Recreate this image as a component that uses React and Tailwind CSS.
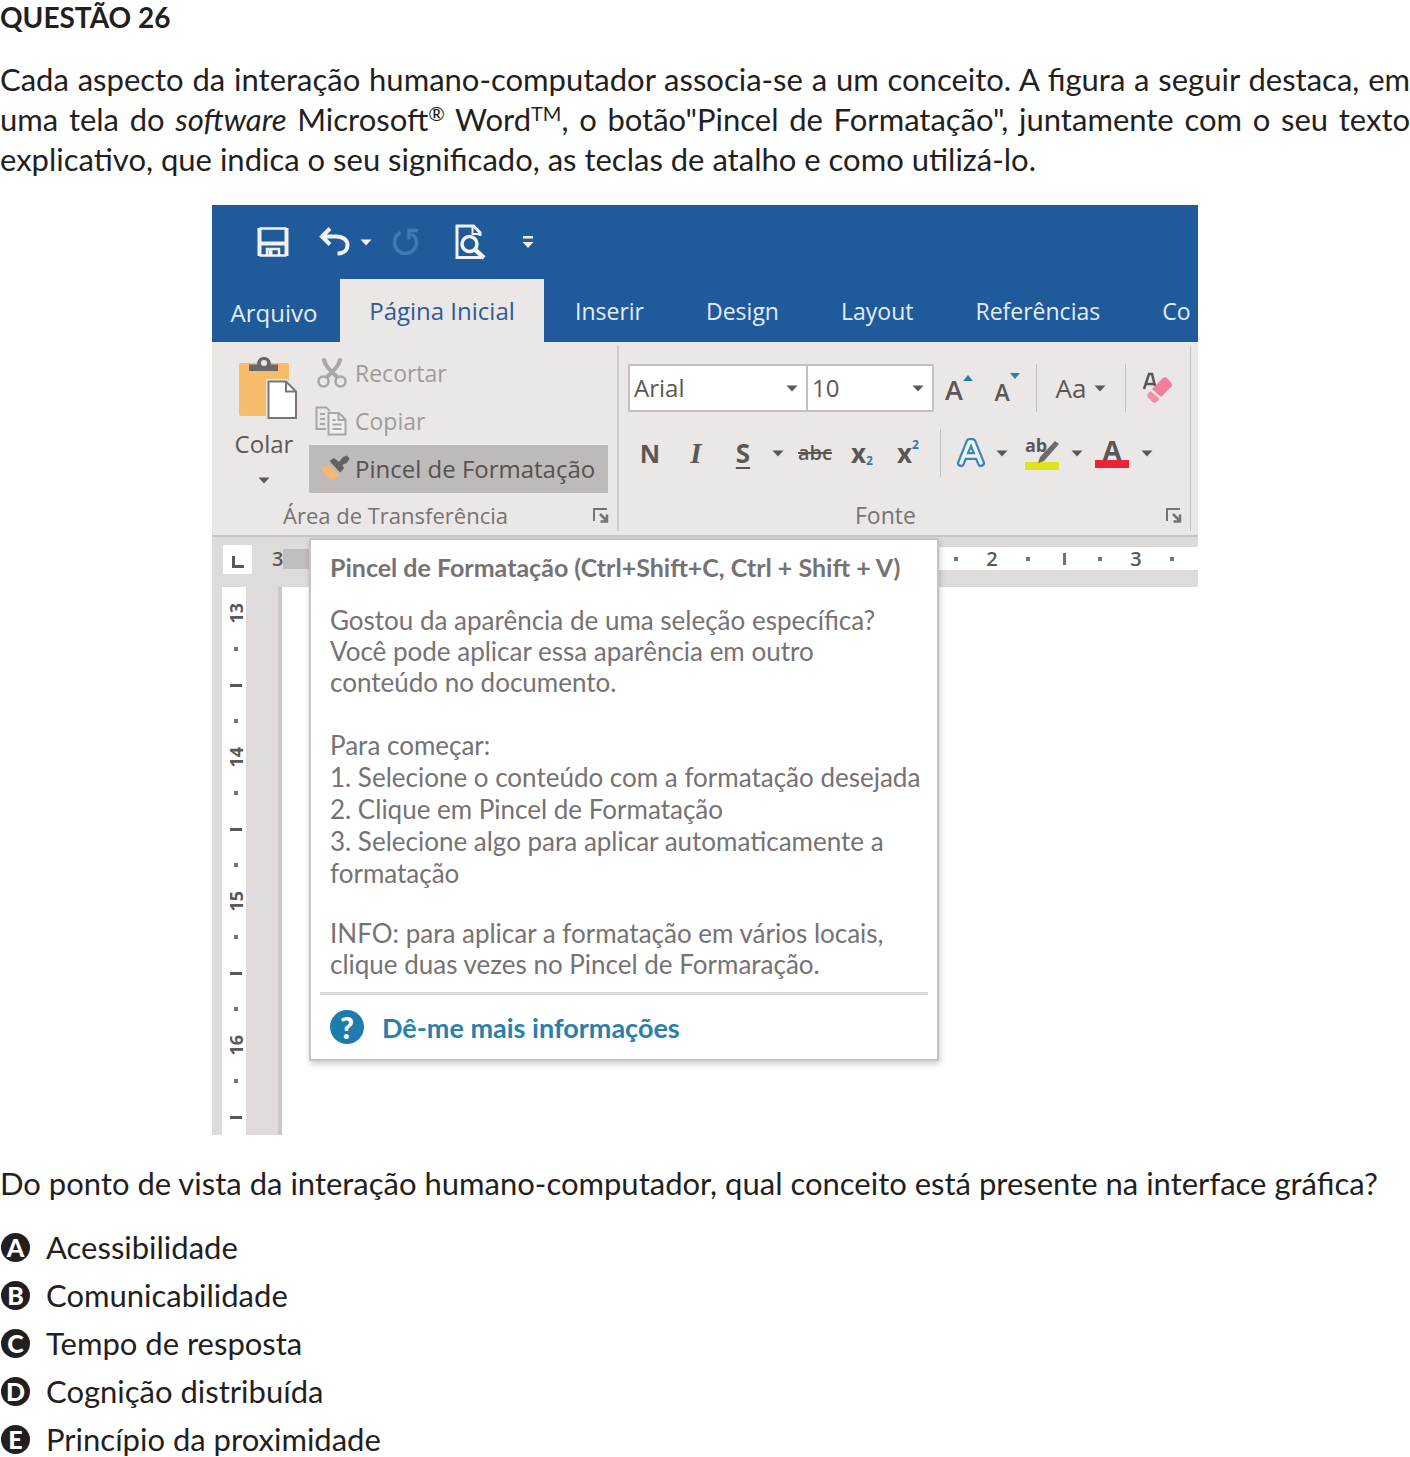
import React from "react";

const UI = "font-['Open_Sans','Noto_Sans',sans-serif]";

function Caret({ className = "text-[#5c5757]" }) {
  return (
    <svg viewBox="0 0 12 7" className={`h-[7px] w-3 shrink-0 ${className}`} fill="currentColor" aria-hidden="true">
      <path d="M0.5 0.5h11L6 6.5z" />
    </svg>
  );
}

function SaveIcon() {
  return (
    <svg viewBox="0 0 32 32" className="size-8" fill="none" stroke="#f3f1f5" strokeWidth="3" aria-hidden="true">
      <path d="M2.500 2v28M29.500 2v28" strokeWidth="4" />
      <path d="M2.500 2.500h27M2.500 29.500h27" strokeWidth="2.500" />
      <path d="M3 17.500h26" strokeWidth="4" />
      <path d="M10 30v-7h12v7" strokeWidth="2.500" />
      <path d="M13.500 24v5" strokeWidth="4" />
    </svg>
  );
}

function UndoIcon() {
  return (
    <svg viewBox="0 0 32 30" className="h-[30px] w-8" fill="none" stroke="#f3f1f5" strokeWidth="4" aria-hidden="true">
      <path d="M12 1.500L4 9.500L12 17.500" />
      <path d="M3.500 9.500H18c7 0 11.500 3.500 11.500 8.500c0 5-3.500 8.500-10 8.500" />
    </svg>
  );
}

function RedoIcon() {
  return (
    <svg viewBox="0 0 28 28" className="size-7" fill="none" stroke="#4179b5" strokeWidth="3.500" aria-hidden="true">
      <path d="M8.500 4.500C4.500 6.500 2.500 10 2.500 14c0 6.500 5 11.500 11 11.500S24.500 20.500 24.500 14.500c0-4-2-7-5-8.500" />
      <path d="M26 2.500h-9v9" />
    </svg>
  );
}

function PreviewIcon() {
  return (
    <svg viewBox="0 0 32 36" className="h-9 w-8" fill="none" stroke="#f3f1f5" strokeWidth="3" aria-hidden="true">
      <path d="M26 12V8.500L19.500 2H3v31.500h24" />
      <path d="M18.500 2v8H26" strokeWidth="2" />
      <circle cx="15.500" cy="20" r="7.500" strokeWidth="3.500" />
      <path d="M20.500 25l9.500 9" strokeWidth="4.500" />
    </svg>
  );
}

function CustomizeIcon() {
  return (
    <svg viewBox="0 0 12 13" className="h-[13px] w-3" fill="#f3f1f5" aria-hidden="true">
      <path d="M1 0h10v2.500H1zM0.500 6h11L6 12z" />
    </svg>
  );
}

function PasteIcon() {
  return (
    <svg viewBox="0 0 60 64" className="h-16 w-[60px]" aria-hidden="true">
      <rect x="1" y="7" width="50" height="53" rx="2" fill="#f7bb6c" />
      <path d="M11 15V8.500h8C19 3.500 22 1 26 1s7 2.500 7 7.500h7V15z" fill="#686769" />
      <circle cx="26" cy="7" r="3" fill="#ebe7e7" />
      <path d="M28 23h21l11 11v30H28z" fill="#ebe7e7" />
      <path d="M30.500 25.500h17.500l10 10v26.500h-27.500z" fill="#fff" stroke="#77757a" strokeWidth="2" />
      <path d="M48 25.500v10h10" fill="none" stroke="#77757a" strokeWidth="2" />
    </svg>
  );
}

function CutIcon() {
  return (
    <svg viewBox="0 0 30 32" className="h-8 w-[30px]" fill="none" stroke="#aaa5a6" strokeWidth="2.500" aria-hidden="true">
      <circle cx="6.500" cy="24.500" r="5" />
      <circle cx="23.500" cy="24.500" r="5" />
      <path d="M6.500 1.500C8 9 13 13 20.500 20.500M23.500 1.500C22 9 17 13 9.500 20.500" strokeWidth="4" />
    </svg>
  );
}

function CopyIcon() {
  return (
    <svg viewBox="0 0 32 30" className="h-[30px] w-8" fill="none" stroke="#aaa5a6" strokeWidth="2" aria-hidden="true">
      <path d="M11 23H1.500V1.500H11l4 3.500" />
      <path d="M5 8h5M5 13h5M5 18h5" />
      <path d="M13.500 7h10.500l6.500 6.500V28.500h-17z" fill="#f1eeee" />
      <path d="M23.500 7v7h7M17.500 14h3M17.500 18.500h9M17.500 23h9" />
    </svg>
  );
}

function BrushIcon() {
  return (
    <svg viewBox="0 0 32 30" className="h-[30px] w-8" aria-hidden="true">
      <path d="M10 11l10 10-5.500 6C9 24 4.500 20 2 14z" fill="#f3b673" />
      <path d="M10.500 7L15 4l5 4 4-5 4-1.500 2.500 3-2 4-5 2.500 1.500 3.500-4 4z" fill="#626063" />
    </svg>
  );
}

function LauncherIcon() {
  return (
    <svg viewBox="0 0 16 15" className="h-[15px] w-4" fill="none" stroke="#777274" strokeWidth="2" aria-hidden="true">
      <path d="M1 13V1h13" />
      <path d="M7 6l6 6M14 6.500v7H7.500" strokeWidth="2.500" />
    </svg>
  );
}

function EraserIcon() {
  return (
    <svg viewBox="0 0 32 34" className="h-[34px] w-8" aria-hidden="true">
      <path d="M2 18L7 3h3l3 12M4 13h8" fill="none" stroke="#5c5757" strokeWidth="2.500" />
      <path d="M10 18L21 7q2-1.500 4 0l4.500 5q1.500 2 0 3.500L19 26z" fill="#f07f9c" />
      <path d="M8.500 20l9 8-3 3q-2 1.500-4 0l-4.500-4.500q-1.500-2 0-4z" fill="#f28ea8" />
    </svg>
  );
}

function TextEffectIcon() {
  return (
    <svg viewBox="0 0 30 32" className="h-8 w-[30px]" aria-hidden="true">
      <path d="M5 26L13.500 5h3L25 26M9 19h12" fill="none" stroke="#3d85b5" strokeWidth="8" strokeLinejoin="round" strokeLinecap="round" />
      <path d="M5 26L13.500 5h3L25 26M9 19h12" fill="none" stroke="#eef6fb" strokeWidth="3.500" strokeLinejoin="round" strokeLinecap="round" />
    </svg>
  );
}

function HighlightIcon() {
  return (
    <span className="flex w-[34px] flex-col">
      <span className="relative h-[26px] text-left text-[18px] font-bold leading-[18px]">
        ab
        <svg viewBox="0 0 26 24" className="absolute right-0 top-1 h-6 w-[26px]" aria-hidden="true">
          <path d="M22 1l4 3-15 17-6 2 2-6z" fill="#6e6a6a" />
        </svg>
      </span>
      <span className="h-2 bg-[#dfe31c]" />
    </span>
  );
}

function FontColorIcon() {
  return (
    <span className="flex w-[34px] flex-col text-center">
      <span className="h-[22px] text-[27px] font-bold leading-[24px]">A</span>
      <span className="h-2 bg-[#ec2436]" />
    </span>
  );
}

function ToolButton({ label, className, children }) {
  return (
    <button type="button" aria-label={label} className={`flex h-12 shrink-0 items-center justify-center ${className}`}>
      {children}
    </button>
  );
}

function Separator() {
  return <span className="h-12 w-px shrink-0 bg-[#c6c1c1]" />;
}

function Combo({ label, value, options, className }) {
  return (
    <div className={`relative flex h-[48px] shrink-0 items-center border-2 border-[#c4c0c0] bg-white ${className}`}>
      <select
        aria-label={label}
        defaultValue={value}
        className="h-full w-full appearance-none bg-transparent pl-1 text-[24px] text-[#5c5757]"
      >
        {options.map((o) => (
          <option key={o}>{o}</option>
        ))}
      </select>
      <span className="pointer-events-none absolute right-2">
        <Caret />
      </span>
    </div>
  );
}

function TitleBar() {
  return (
    <div className="flex h-[74px] items-center pl-[45px]">
      <button type="button" aria-label="Salvar"><SaveIcon /></button>
      <button type="button" aria-label="Desfazer" className="ml-[29px] flex items-center gap-2.5">
        <UndoIcon />
        <Caret className="text-[#f3f1f5]" />
      </button>
      <button type="button" aria-label="Refazer" className="ml-5"><RedoIcon /></button>
      <button type="button" aria-label="Visualizar impressão" className="ml-[34px]"><PreviewIcon /></button>
      <button type="button" aria-label="Personalizar" className="ml-9"><CustomizeIcon /></button>
    </div>
  );
}

function Tabs() {
  const rest = ["Inserir", "Design", "Layout", "Referências"];
  return (
    <div role="tablist" className="flex h-[63px] overflow-hidden text-[23px] text-[#e4edf7]">
      <button type="button" role="tab" className="w-32 shrink-0 pr-1 pt-1 text-[24px]">Arquivo</button>
      <button type="button" role="tab" aria-selected="true" className="w-[204px] shrink-0 bg-[#ebe7e7] text-[24px] text-[#2f5b95]">
        Página Inicial
      </button>
      {rest.map((t) => (
        <button key={t} type="button" role="tab" className="shrink-0 px-[31px]">{t}</button>
      ))}
      <button type="button" role="tab" className="shrink-0 pl-[31px]">Co</button>
    </div>
  );
}

function ClipboardGroup() {
  return (
    <section className="flex w-[407px] shrink-0 flex-col border-r-2 border-[#d0cccc]">
      <div className="flex">
        <button type="button" className="flex w-[97px] flex-col items-center pl-[15px] pt-2.5 text-[24px] leading-8 text-[#5c5757]">
          <PasteIcon />
          <span className="mt-2 pr-2">Colar</span>
          <span className="mt-1 flex h-8 items-center pr-2"><Caret /></span>
        </button>
        <div className="flex w-[299px] flex-col pt-[3px] text-[23px]">
          <button type="button" className="flex h-12 items-center gap-2 pl-2 text-[#a09b9b]"><CutIcon />Recortar</button>
          <button type="button" className="flex h-12 items-center gap-2 pl-1.5 text-[#a09b9b]"><CopyIcon />Copiar</button>
          <button type="button" className="flex h-12 items-center gap-1 whitespace-nowrap bg-[#bdbab9] pl-2.5 text-[24px] text-[#565152]"><BrushIcon />Pincel de Formatação</button>
        </div>
      </div>
      <div className="mt-auto flex h-8 items-center pl-[71px] pr-2 text-[22px] text-[#777274]">
        <span>Área de Transferência</span>
        <button type="button" aria-label="Opções da área de transferência" className="ml-auto"><LauncherIcon /></button>
      </div>
    </section>
  );
}

function FontGroup() {
  return (
    <section className="flex min-w-0 flex-1 flex-col border-r border-[#c6c1c1] pl-[9px] pt-4 text-[#5c5757]">
      <div className="flex h-[52px] items-center">
        <Combo label="Fonte" value="Arial" options={["Arial", "Calibri"]} className="w-[180px]" />
        <Combo label="Tamanho" value="10" options={["10", "11", "12"]} className="-ml-0.5 w-32" />
        <ToolButton label="Aumentar fonte" className="w-[50px] pt-1">
          <span className="text-[27px] font-semibold">A</span>
          <svg viewBox="0 0 10 6" className="mb-6 h-1.5 w-2.5" aria-hidden="true"><path d="M0 6h10L5 0z" fill="#2482a8" /></svg>
        </ToolButton>
        <ToolButton label="Diminuir fonte" className="w-[46px]">
          <span className="pt-2 text-[23px] font-semibold">A</span>
          <svg viewBox="0 0 10 6" className="mb-6 h-1.5 w-2.5" aria-hidden="true"><path d="M0 0h10L5 6z" fill="#2482a8" /></svg>
        </ToolButton>
        <span className="w-1.5 shrink-0" />
        <Separator />
        <ToolButton label="Maiúsculas e minúsculas" className="w-[88px] gap-2 text-[26px]">Aa<Caret /></ToolButton>
        <Separator />
        <ToolButton label="Limpar formatação" className="w-[64px]"><EraserIcon /></ToolButton>
      </div>
      <div className="mt-[13px] flex h-[52px] items-center">
        <ToolButton label="Negrito" className="w-[44px] text-[25px] font-bold">N</ToolButton>
        <ToolButton label="Itálico" className="w-12 font-['Liberation_Serif',serif] text-[29px] font-bold italic">I</ToolButton>
        <ToolButton label="Sublinhado" className="w-[46px] text-[26px] font-bold underline decoration-2 underline-offset-4">S</ToolButton>
        <ToolButton label="Estilo do sublinhado" className="w-6"><Caret /></ToolButton>
        <ToolButton label="Tachado" className="w-[50px] text-[20px] font-semibold line-through decoration-2">abc</ToolButton>
        <ToolButton label="Subscrito" className="w-[44px] text-[26px] font-bold">
          x<span className="mt-4 text-[12px] text-[#2482a8]">2</span>
        </ToolButton>
        <ToolButton label="Sobrescrito" className="w-12 text-[26px] font-bold">
          x<span className="mb-4 text-[12px] text-[#2482a8]">2</span>
        </ToolButton>
        <span className="w-2" />
        <Separator />
        <ToolButton label="Efeitos de texto" className="w-[78px] gap-2.5 pl-1"><TextEffectIcon /><Caret /></ToolButton>
        <ToolButton label="Realce" className="w-[70px] gap-3"><HighlightIcon /><Caret /></ToolButton>
        <ToolButton label="Cor da fonte" className="w-[70px] gap-3"><FontColorIcon /><Caret /></ToolButton>
      </div>
      <div className="mt-auto flex h-8 items-center pl-[227px] pr-2 text-[23px] text-[#777274]">
        <span>Fonte</span>
        <button type="button" aria-label="Opções de fonte" className="ml-auto"><LauncherIcon /></button>
      </div>
    </section>
  );
}

function HorizontalRuler() {
  const marks = ["·", "2", "·", "|", "·", "3", "·"];
  return (
    <div className="flex h-[52px] items-start overflow-hidden border-t-2 border-[#c9c5c5] bg-[#dedbda] pt-2 text-[20px] font-semibold text-[#5c5757]">
      <div className="ml-[11px] flex h-[29px] w-[29px] shrink-0 items-center justify-center bg-white">
        <svg viewBox="0 0 12 12" className="mt-1 size-3" aria-hidden="true"><path d="M1.500 0v10.500H12" fill="none" stroke="#5c5757" strokeWidth="3" /></svg>
      </div>
      <span className="ml-5 leading-7">3</span>
      <span className="mt-1 h-5 w-10 shrink-0 bg-[#c0bdbc]" />
      <div className="mt-0.5 flex h-[23px] flex-1 items-center justify-end bg-white pr-2">
        {marks.map((m, i) => (
          <span key={i} className="flex w-9 justify-center">
            {m === "·" ? <i className="size-1 bg-[#777274]" /> : m === "|" ? <i className="h-3 w-[3px] bg-[#777274]" /> : m}
          </span>
        ))}
      </div>
    </div>
  );
}

function VerticalRuler() {
  const marks = ["13", "·", "-", "·", "14", "·", "-", "·", "15", "·", "-", "·", "16", "·", "-"];
  return (
    <div className="flex w-[70px] border-r-4 border-[#cac7c7] bg-[#dfdbda] pl-2.5">
      <div className="flex w-6 flex-col bg-white pt-2 text-[18px] font-bold leading-6 text-[#5c5757]">
        {marks.map((m, i) => (
          <span key={i} className="flex h-9 items-center justify-center pl-1">
            {m === "·" ? (
              <i className="size-1 bg-[#777274]" />
            ) : m === "-" ? (
              <i className="h-[3px] w-3 bg-[#5c5757]" />
            ) : (
              <span className="rotate-180 [writing-mode:vertical-rl]">{m}</span>
            )}
          </span>
        ))}
      </div>
    </div>
  );
}

function Tooltip() {
  return (
    <div
      role="tooltip"
      className="absolute left-[97px] top-[333px] w-[630px] border-2 border-[#c6c3c3] bg-white px-[9px] pb-[15px] pt-3 font-['Lato','Open_Sans',sans-serif] text-[26px] leading-[31px] text-[#767273] shadow-[1px_3px_6px_rgba(0,0,0,0.2)]"
    >
      <div className="whitespace-nowrap px-2.5">
        <h2 className="text-[25px] font-bold">Pincel de Formatação (Ctrl+Shift+C, Ctrl + Shift + V)</h2>
        <p className="mt-[22px]">
          Gostou da aparência de uma seleção específica?<br />
          Você pode aplicar essa aparência em outro<br />
          conteúdo no documento.
        </p>
        <p className="mt-8">Para começar:</p>
        <ol className="leading-8">
          <li>1. Selecione o conteúdo com a formatação desejada</li>
          <li>2. Clique em Pincel de Formatação</li>
          <li>3. Selecione algo para aplicar automaticamente a<br />formatação</li>
        </ol>
        <p className="mt-[29px]">
          INFO: para aplicar a formatação em vários locais,<br />
          clique duas vezes no Pincel de Formaração.
        </p>
      </div>
      <hr className="mt-3 border-t-[3px] border-[#dddada]" />
      <a href="#info" className="mt-[15px] flex items-center gap-[18px] px-2.5 text-[27px] font-bold text-[#2a80ad]">
        <span className="flex size-[34px] items-center justify-center rounded-full bg-[#1d7cab] text-[30px] font-black text-white">?</span>
        Dê-me mais informações
      </a>
    </div>
  );
}

function WordWindow() {
  return (
    <figure className={`relative mx-auto mt-[26px] w-full max-w-[986px] ${UI}`}>
      <div className="bg-[#1f5a9b]">
        <TitleBar />
        <Tabs />
      </div>
      <div className="flex h-[193px] bg-[#ebe7e7] py-1 pr-[7px]">
        <ClipboardGroup />
        <FontGroup />
      </div>
      <HorizontalRuler />
      <div className="flex h-[548px]">
        <VerticalRuler />
      </div>
      <Tooltip />
    </figure>
  );
}

const answers = [
  ["A", "Acessibilidade"],
  ["B", "Comunicabilidade"],
  ["C", "Tempo de resposta"],
  ["D", "Cognição distribuída"],
  ["E", "Princípio da proximidade"],
];

export default function App() {
  return (
    <main className="overflow-hidden bg-white font-['Lato','Open_Sans',sans-serif] text-[31px] leading-10 text-[#231f20]">
      <h1 className="text-[28px] font-bold leading-[34px]">QUESTÃO 26</h1>
      <p className="mt-[25px]">
        <span className="block [text-align-last:justify]">
          Cada aspecto da interação humano-computador associa-se a um conceito. A figura a seguir destaca, em
        </span>
        <span className="block [text-align-last:justify]">
          uma tela do <em>software</em> Microsoft<sup className="text-[20px] leading-none">®</sup> Word<sup className="text-[20px] leading-none">TM</sup>, o botão"Pincel de Formatação", juntamente com o seu texto
        </span>
        <span className="block">explicativo, que indica o seu significado, as teclas de atalho e como utilizá-lo.</span>
      </p>
      <WordWindow />
      <p className="mt-7">Do ponto de vista da interação humano-computador, qual conceito está presente na interface gráfica?</p>
      <ol className="mt-5">
        {answers.map(([k, t]) => (
          <li key={k} className="flex h-12 items-center gap-4">
            <span className="ml-px flex size-[29px] items-center justify-center rounded-full bg-[#231f20] text-[25px] font-black leading-none text-white">
              {k}
            </span>
            {t}
          </li>
        ))}
      </ol>
    </main>
  );
}
